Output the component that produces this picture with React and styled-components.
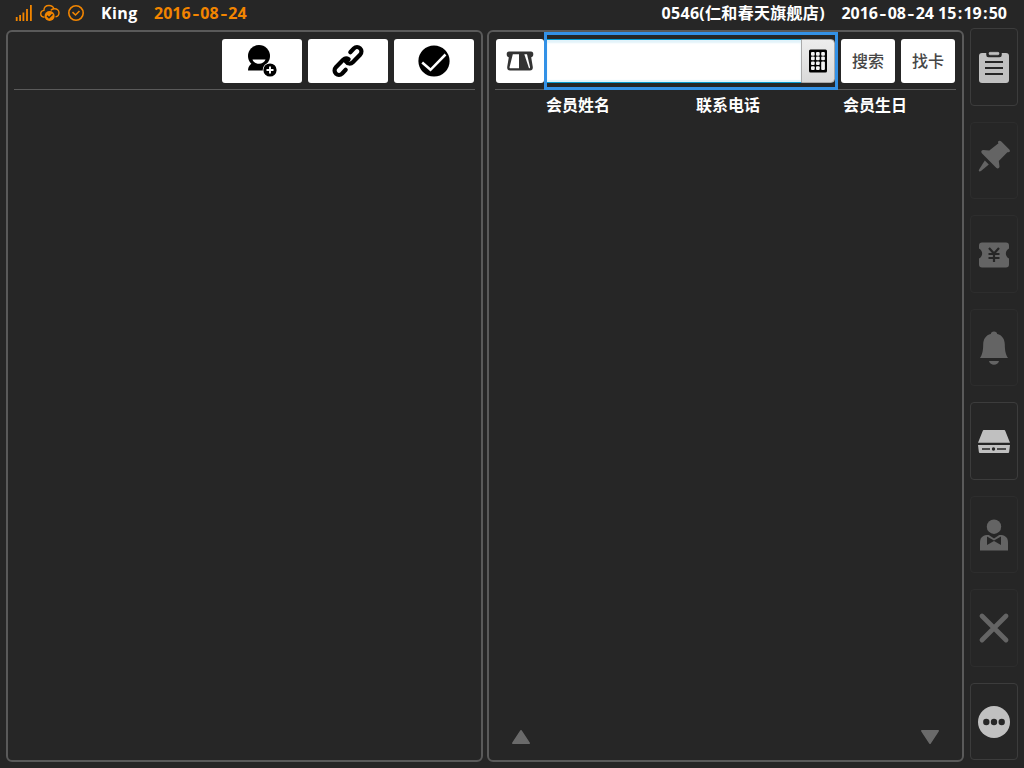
import React from "react";
import styled, { createGlobalStyle } from "styled-components";

const GlobalStyle = createGlobalStyle`
  * { box-sizing: border-box; }
  body { margin: 0; background: #262626; overflow: hidden; }
  svg { display: block; flex: none; overflow: visible; }
`;

const Screen = styled.div`
  width: 1024px;
  height: 768px;
  display: flex;
  flex-direction: column;
  background: #262626;
  color: #fff;
  font: 700 16px/26px "Open Sans", "Noto Sans CJK SC", sans-serif;
`;
const StatusBar = styled.header`
  height: 28px;
  flex: none;
  display: flex;
  align-items: flex-start;
  padding: 0 17px 0 15px;
  white-space: nowrap;
`;
const StatusIcons = styled.div`
  display: flex;
  align-items: center;
  height: 26px;
  width: 86px;
  color: #f28500;
`;
const UserName = styled.span`
  width: 53px;
  letter-spacing: 0.4px;
`;
const DateText = styled.span`
  color: ${(p) => (p.$accent ? "#f28500" : "#fff")};
`;
const Dash = styled.span`
  display: inline-block;
  width: 9.7px;
  text-align: center;
  transform: scaleX(1.3);
`;
const Colon = styled.span`
  display: inline-block;
  width: 7px;
  text-align: center;
`;
const Store = styled.span`
  margin-left: auto;
  margin-right: 16.5px;
  letter-spacing: 0.3px;
`;
const Body = styled.div`
  flex: 1;
  display: flex;
  padding: 0 6px;
`;
const Panel = styled.section`
  width: 477px;
  height: 732px;
  margin: 2px ${(p) => p.$gap}px 0 0;
  border: 2px solid #5a5a5a;
  border-radius: 6px;
  display: flex;
  flex-direction: column;
`;
const Toolbar = styled.div`
  height: 58px;
  margin: 0 6px;
  padding: 0 1px;
  display: flex;
  align-items: center;
  justify-content: flex-end;
  gap: ${(p) => p.$gap}px;
  border-bottom: 1px solid #5a5a5a;
`;
const Button = styled.button`
  width: ${(p) => p.$w}px;
  height: 44px;
  flex: none;
  margin: 1px 0 0 ${(p) => p.$ml || 0}px;
  padding: 0;
  border: 0;
  border-radius: 3px;
  background: #fff;
  color: #464646;
  display: flex;
  align-items: center;
  justify-content: center;
  font: 500 16px/24px "Noto Sans CJK SC", sans-serif;
`;
const ButtonLabel = styled.span`
  padding-bottom: 2px;
`;
const SearchBox = styled.div`
  width: 294px;
  height: 58px;
  flex: none;
  margin-bottom: -1px;
  position: relative;
  border: 3px solid #3391e6;
  display: flex;
  align-items: center;
`;
const Field = styled.input`
  width: 254px;
  height: 44px;
  padding: 0 6px;
  border: 0;
  border-top: 1px solid #079ace;
  border-bottom: 1px solid #079ace;
  box-shadow: inset 0 3px 2px #e2f3fa, inset 0 -2px 1px #e2f3fa;
  background: #fff;
  outline: none;
  font: inherit;
`;
const KeypadButton = styled.button`
  width: 34px;
  height: 44px;
  padding: 0;
  border: 1px solid #a9a9a9;
  border-radius: 0 4px 4px 0;
  background: linear-gradient(#ededed, #d9d9d9);
  display: flex;
  align-items: center;
  justify-content: center;
`;
const ColumnHeads = styled.div`
  display: flex;
  padding-left: 57px;
  line-height: 24px;
  margin-top: 3px;
`;
const Column = styled.span`
  width: ${(p) => p.$w}px;
`;
const Pager = styled.div`
  margin-top: auto;
  padding: 0 22px 15px 22px;
  display: flex;
  justify-content: space-between;
  color: #6a6a6a;
`;
const Side = styled.nav`
  width: 48px;
  display: flex;
  flex-direction: column;
  gap: 16px;
`;
const SideItem = styled.button`
  width: 48px;
  height: 77.5px;
  flex: none;
  padding: 2px 0 0;
  border: 1px solid ${(p) => (p.$on ? "#3c3c3c" : "#2d2d2d")};
  border-radius: 4px;
  background: #262626;
  color: ${(p) => (p.$on ? "#c0c0c0" : "#646464")};
  display: flex;
  align-items: center;
  justify-content: center;
`;

const DateLabel = ({ value, accent }) => (
  <DateText $accent={accent}>
    {value.split(/([-:])/).map((part, i) =>
      part === "-" ? <Dash key={i}>-</Dash> : part === ":" ? <Colon key={i}>:</Colon> : part
    )}
  </DateText>
);

const Signal = () => (
  <svg width="18" height="18" viewBox="0 0 18 18" fill="none" stroke="currentColor" strokeWidth="1.8">
    <path d="M1.7 17v-4M5.100 17V11M8.400 17V8.500M12 17V5M15.900 17V1" />
  </svg>
);
const Cloud = () => (
  <svg width="20" height="18" viewBox="0 0 20 18" fill="none" stroke="currentColor" strokeWidth="1.4">
    <path d="M4.500 13.300C1.500 13 .7 11.500.7 9.800c0-2 1.500-3.200 3.200-3.400C4 3 6.500 1.500 9 1.500c2.600 0 4.300 1.200 5 3.300 3-.3 5 1.400 5 3.900 0 2.200-1.200 3.800-3.500 4.200M14 4.800c-1.500.1-2.500.7-3.200 1.600" />
    <circle cx="9.600" cy="12" r="5" fill="currentColor" stroke="none" />
    <path d="M7 11.700l2 2.100 3.500-3.500" stroke="#262626" strokeWidth="1.500" />
  </svg>
);
const Clock = () => (
  <svg width="16" height="16" viewBox="0 0 16 16" fill="none" stroke="currentColor" strokeWidth="1.600">
    <circle cx="8" cy="8" r="7.200" />
    <path d="M4.500 7.200l3 2.800 4-4" />
  </svg>
);
const AddUser = () => (
  <svg width="32" height="34" viewBox="0 0 32 34">
    <path d="M5 20h16v6.500H2c0-2.500.8-4.500 3-6.500z" />
    <circle cx="13" cy="12" r="11" />
    <path d="M6.500 15.500h13c-.8 2.700-3.500 4.200-6.500 4.200s-5.700-1.500-6.500-4.200z" fill="#fff" />
    <circle cx="24" cy="26" r="7.300" fill="#fff" />
    <circle cx="24" cy="26" r="6.600" />
    <path d="M24 22.500v7M20.500 26h7" stroke="#fff" strokeWidth="1.900" />
  </svg>
);
const Chain = () => (
  <svg width="34" height="34" viewBox="0 0 34 34" fill="none" stroke="#000" strokeWidth="4.200" strokeLinecap="round">
    <path d="M19.300 8.200l3.500-3.700c2-2 4.500-1.800 6.200-.2 1.800 1.700 2 4.400.1 6.400l-7.300 7.500c-2 2-5.300 1.800-7-.8" />
    <path d="M14.700 25.800l-3.500 3.700c-2 2-4.500 1.800-6.200.2-1.800-1.700-2-4.400-.1-6.400l7.300-7.500c1.600-1.600 3.900-1.600 5.400-.5" />
  </svg>
);
const Confirm = () => (
  <svg width="32" height="32" viewBox="0 0 32 32">
    <circle cx="16" cy="16" r="15.600" />
    <path d="M4.200 17.500l8.300 7.300L27.500 9.500" fill="none" stroke="#fff" strokeWidth="2.500" />
  </svg>
);
const SwipeCard = () => (
  <svg width="28" height="20" viewBox="0 0 28 20">
    <path d="M3 .5h22c1.500 0 2.300 1 2.300 2.800S26.500 6 25.200 6.300l1.600 9.700c.2 2-.8 3.500-2.800 3.500H4c-2 0-3-1.500-2.800-3.500l1.600-9.700C1.500 6 .7 5.100.7 3.300S1.500.5 3 .5z" fill="#333" />
    <path d="M6.800 3.200H13v14H4.500c-.8 0-1-.5-.9-1.300z" fill="#fff" />
    <path d="M18.300 3.200h2.700l3 12.700c.1.900-.2 1.300-1 1.300z" fill="#fff" />
  </svg>
);
const Keypad = () => (
  <svg width="18" height="24" viewBox="0 0 18 24">
    <rect y=".5" width="18" height="23" rx="1.500" />
    <g fill="#f2f2f2">
      {[2, 7, 12.200].map((x, c) =>
        [3, 7.600, 12.400, 17.200].map((y, r) =>
          c === 2 && r > 1 ? null : <rect key={x + "-" + y} x={x} y={y} width="3.700" height="3.700" rx="1" />
        )
      )}
      <rect x="12.200" y="12.400" width="3.700" height="8.500" rx="1" />
    </g>
  </svg>
);
const Triangle = ({ down }) => (
  <svg width="20" height="16" viewBox="0 0 20 16">
    <path d={down ? "M1.800 1.800h16.400L10 14.200z" : "M1.800 14.200h16.400L10 1.800z"} fill="currentColor" stroke="currentColor" strokeWidth="1.600" strokeLinejoin="round" />
  </svg>
);

const icons = {
  clipboard: (
    <>
      <rect x="1" y="2.500" width="30" height="30" rx="3" fill="currentColor" />
      <path d="M9 2v2.500c0 1 .5 1.500 1.500 1.500h11c1 0 1.500-.5 1.500-1.500V2" fill="#262626" stroke="#262626" strokeWidth="1.500" />
      <path d="M11 3.300V2.800c0-.6.400-1 1-1h8c.6 0 1 .4 1 1v.5c0 .6-.4 1-1 1h-8c-.6 0-1-.4-1-1z" fill="currentColor" stroke="currentColor" strokeWidth=".6" />
      <path d="M7 11.500h18M7 17.500h18M7 23.500h18" stroke="#262626" strokeWidth="2" />
    </>
  ),
  pin: (
    <>
      <path d="M20.300.3c.9-1 2.300-.5 3 .2l8 8c1.500 1.600.1 3.400-1.900 2.700l-8.600 8.700.7 5.500c-.1 2-2 2.600-3.300 1.300L3.800 12.200c-1.200-1.500-.2-3.300 1.600-3.200l5.900.5 9.200-7.200c-.6-.6-.6-1.400-.2-2z" fill="currentColor" />
      <path d="M6.800 19.500l4 4-7.500 6.300c-1.500 1.200-3.200.8-2.200-1.300z" fill="currentColor" />
    </>
  ),
  coupon: (
    <>
      <path d="M4 4.500h24c2 0 3 1 3 3v3c-4.200 2-4.200 8 0 10v6c0 2-1 3-3 3H4c-2 0-3-1-3-3v-6c4.200-2 4.200-8 0-10v-3c0-2 1-3 3-3z" fill="currentColor" />
      <path d="M11 10l5 5.500 5-5.500M10.500 16h11M10.500 20h11M16 15.500v8.500" fill="none" stroke="#262626" strokeWidth="2.200" />
    </>
  ),
  bell: (
    <path d="M16 0c2 0 3 1.200 3.200 2.600 5 1.200 7.500 5 7.600 10.400.1 7 1 10 3.200 13.500H2c2.200-3.500 3.100-6.500 3.200-13.500.1-5.400 2.600-9.200 7.600-10.400C13 1.200 14 0 16 0zM11 29.500h10c-.7 2.500-2.600 3.700-5 3.700s-4.300-1.200-5-3.700z" fill="currentColor" />
  ),
  drive: (
    <>
      <path d="M6 5h20c.7 0 1 .2 1.300.9L32 17.800H0L4.700 5.900C5 5.200 5.300 5 6 5zM0 20h32l-.8 6.500c-.1 1-.6 1.500-1.500 1.500H2.300c-.9 0-1.400-.5-1.500-1.500z" fill="currentColor" />
      <path d="M4 24h8M19 24h9" stroke="#262626" strokeWidth="1.600" />
      <circle cx="15.500" cy="24" r="1.700" fill="#262626" />
    </>
  ),
  waiter: (
    <>
      <circle cx="16" cy="7.700" r="7.200" fill="currentColor" />
      <path d="M2 31.500v-8C2 19 4.500 16.500 8.500 16h15c4 .5 6.500 3 6.500 7.500v8z" fill="currentColor" />
      <path d="M10 15.500h12L16 19.500z" fill="#262626" />
      <path d="M9 17.500l7 4 7-4v8.500l-7-4-7 4z" fill="#262626" />
    </>
  ),
  close: <path d="M4 4l24 24M28 4L4 28" stroke="currentColor" strokeWidth="4.800" strokeLinecap="round" />,
  more: (
    <>
      <circle cx="16" cy="16.500" r="16" fill="currentColor" />
      <g fill="#262626">
        <circle cx="8.300" cy="16.500" r="3.200" />
        <circle cx="16" cy="16.500" r="3.200" />
        <circle cx="23.700" cy="16.500" r="3.200" />
      </g>
    </>
  ),
};
const sideItems = [
  { name: "clipboard", on: true, shift: -0.5 },
  { name: "pin", shift: -3 },
  { name: "coupon", shift: 0 },
  { name: "bell", shift: 0.5 },
  { name: "drive", on: true, shift: 0 },
  { name: "waiter", shift: 1 },
  { name: "close", shift: 0 },
  { name: "more", on: true, shift: 0.5 },
];

const StatusGap = styled.i`
  width: ${(p) => p.$w}px;
`;

export default function App() {
  return (
    <Screen>
      <GlobalStyle />
      <StatusBar>
        <StatusIcons>
          <Signal />
          <StatusGap $w={7} />
          <Cloud />
          <StatusGap $w={8} />
          <Clock />
        </StatusIcons>
        <UserName>King</UserName>
        <DateLabel value="2016-08-24" accent />
        <Store>0546(仁和春天旗舰店)</Store>
        <DateLabel value="2016-08-24 15:19:50" />
      </StatusBar>
      <Body>
        <Panel $gap={4}>
          <Toolbar $gap={6}>
            <Button $w={80}><AddUser /></Button>
            <Button $w={80}><Chain /></Button>
            <Button $w={80}><Confirm /></Button>
          </Toolbar>
        </Panel>
        <Panel $gap={6}>
          <Toolbar $gap={0}>
            <Button $w={48}><SwipeCard /></Button>
            <SearchBox>
              <Field />
              <KeypadButton><Keypad /></KeypadButton>
            </SearchBox>
            <Button $w={54} $ml={3}><ButtonLabel>搜索</ButtonLabel></Button>
            <Button $w={54} $ml={6}><ButtonLabel>找卡</ButtonLabel></Button>
          </Toolbar>
          <ColumnHeads>
            <Column $w={150}>会员姓名</Column>
            <Column $w={147}>联系电话</Column>
            <Column $w={80}>会员生日</Column>
          </ColumnHeads>
          <Pager>
            <Triangle />
            <Triangle down />
          </Pager>
        </Panel>
        <Side>
          {sideItems.map(({ name, on, shift }) => (
            <SideItem key={name} $on={on}>
              <svg width="32" height="34" viewBox="0 0 32 34">
                <g transform={`translate(0 ${shift})`}>{icons[name]}</g>
              </svg>
            </SideItem>
          ))}
        </Side>
      </Body>
    </Screen>
  );
}
